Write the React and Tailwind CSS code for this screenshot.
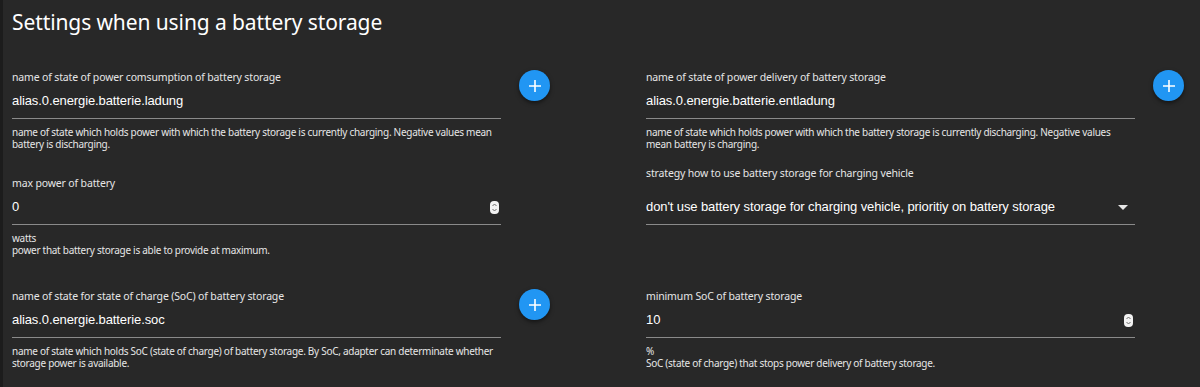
import { useState } from "react";

const labelFont = { fontFamily: '"Noto Sans", "Open Sans", sans-serif' };

function PlusButton() {
  return (
    <button
      type="button"
      className="flex h-[31px] w-[31px] shrink-0 items-center justify-center rounded-full bg-[#2196f3] shadow-[0_2px_4px_rgba(0,0,0,0.5)]"
    >
      <svg width="14" height="14" viewBox="0 0 14 14">
        <path d="M7 1v12M1 7h12" stroke="#fff" strokeWidth="1.6" />
      </svg>
    </button>
  );
}

function Spinner() {
  return (
    <svg width="9" height="13" viewBox="0 0 9 13" className="shrink-0">
      <rect x="0" y="0" width="9" height="13" rx="4" fill="#f2f2f2" />
      <path d="M2.5 5l2-2 2 2M2.5 8l2 2 2-2" stroke="#6b6b6b" strokeWidth="1" fill="none" />
    </svg>
  );
}

function Field({ label, value, helper, type, select }) {
  return (
    <div className="w-[489px] shrink-0">
      <div
        className={`text-[10.5px] leading-[14px] tracking-[-0.15px] text-[#e6e6e6] ${select ? "-mt-[10px]" : ""}`}
        style={labelFont}
      >
        {label}
      </div>
      <div
        className={`flex h-[33px] items-center border-b border-[#8a8a8a] pb-[2px] pr-[2px] ${select ? "mt-[12px]" : "mt-[2px]"}`}
      >
        <span
          className="flex-1 text-[13px] tracking-[-0.1px] text-white"
          style={{ fontFamily: '"Liberation Sans", Arial, sans-serif' }}
        >
          {value}
        </span>
        {type === "number" && <Spinner />}
        {select && (
          <svg width="10" height="5" viewBox="0 0 10 5" className="mr-[5px]">
            <path d="M0 0h10L5 5z" fill="#e6e6e6" />
          </svg>
        )}
      </div>
      {helper && (
        <div
          className="mt-[7px] text-[10px] leading-[12px] tracking-[-0.28px] text-[#e6e6e6]"
          style={labelFont}
        >
          {helper}
        </div>
      )}
    </div>
  );
}

function Cell({ children, plus }) {
  return (
    <div className="flex items-start">
      {children}
      {plus && (
        <div className="ml-[18px]">
          <PlusButton />
        </div>
      )}
    </div>
  );
}

export default function App() {
  const [strategy] = useState(
    "don't use battery storage for charging vehicle, prioritiy on battery storage"
  );

  return (
    <div className="min-h-screen border-l-[3px] border-[#1c1c1c] bg-[#282828] pl-[9px] pt-[7px]">
      <h1
        className="text-[21px] leading-[30px] tracking-[-0.1px] text-white"
        style={labelFont}
      >
        Settings when using a battery storage
      </h1>

      <div className="mt-[33px] grid grid-cols-[634px_1fr]">
        <Cell plus>
          <Field
            label="name of state of power comsumption of battery storage"
            value="alias.0.energie.batterie.ladung"
            helper="name of state which holds power with which the battery storage is currently charging. Negative values mean battery is discharging."
          />
        </Cell>
        <Cell plus>
          <Field
            label="name of state of power delivery of battery storage"
            value="alias.0.energie.batterie.entladung"
            helper="name of state which holds power with which the battery storage is currently discharging. Negative values mean battery is charging."
          />
        </Cell>
      </div>

      <div className="mt-[26px] grid grid-cols-[634px_1fr]">
        <Cell>
          <Field
            label="max power of battery"
            value="0"
            type="number"
            helper={
              <>
                watts
                <br />
                power that battery storage is able to provide at maximum.
              </>
            }
          />
        </Cell>
        <Cell>
          <Field
            label="strategy how to use battery storage for charging vehicle"
            value={strategy}
            select
          />
        </Cell>
      </div>

      <div className="mt-[33px] grid grid-cols-[634px_1fr]">
        <Cell plus>
          <Field
            label="name of state for state of charge (SoC) of battery storage"
            value="alias.0.energie.batterie.soc"
            helper="name of state which holds SoC (state of charge) of battery storage. By SoC, adapter can determinate whether storage power is available."
          />
        </Cell>
        <Cell>
          <Field
            label="minimum SoC of battery storage"
            value="10"
            type="number"
            helper={
              <>
                %
                <br />
                SoC (state of charge) that stops power delivery of battery storage.
              </>
            }
          />
        </Cell>
      </div>
    </div>
  );
}
